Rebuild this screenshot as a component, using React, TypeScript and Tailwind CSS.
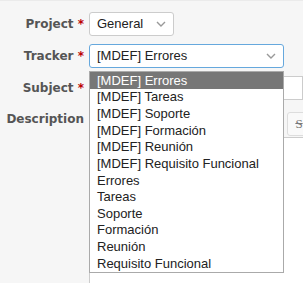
import React from "react";

const label = "w-[84px] shrink-0 text-right text-[12px] font-bold text-[#555]";
const selectBase =
  "flex h-[24px] items-center justify-between rounded-[3px] border bg-white pl-[7px] pr-[7px] text-[13px] text-[#222]";

const trackers = [
  "[MDEF] Errores",
  "[MDEF] Tareas",
  "[MDEF] Soporte",
  "[MDEF] Formación",
  "[MDEF] Reunión",
  "[MDEF] Requisito Funcional",
  "Errores",
  "Tareas",
  "Soporte",
  "Formación",
  "Reunión",
  "Requisito Funcional",
];

function Chevron() {
  return (
    <svg width="10" height="6" viewBox="0 0 10 6" className="shrink-0">
      <path d="M1 1 L5 5 L9 1" fill="none" stroke="#999" strokeWidth="1.4" />
    </svg>
  );
}

function Required() {
  return <span className="text-[#bb0000]"> *</span>;
}

export default function App() {
  return (
    <div className="relative h-[283px] w-[303px] overflow-hidden border-t border-[#ebebeb] bg-[#f6f6f6] font-['DejaVu_Sans',sans-serif]">
      <div className="flex flex-col pt-[11px]">
        <div className="flex items-center gap-[5px]">
          <label className={label}>
            Project
            <Required />
          </label>
          <div className={`${selectBase} w-[85px] border-[#ccc] font-['Liberation_Sans',sans-serif]`}>
            <span>General</span>
            <Chevron />
          </div>
        </div>

        <div className="mt-[8px] flex items-center gap-[5px]">
          <label className={label}>
            Tracker
            <Required />
          </label>
          <div className={`${selectBase} w-[195px] border-[#66a8dd] font-['Liberation_Sans',sans-serif]`}>
            <span>[MDEF] Errores</span>
            <Chevron />
          </div>
        </div>

        <div className="mt-[8px] flex items-center gap-[5px]">
          <label className={`${label} -mt-[1px]`}>
            Subject
            <Required />
          </label>
          <div className="h-[24px] flex-1 border border-[#ccc] bg-white" />
        </div>

        <div className="flex gap-[5px]">
          <label className={`${label} pt-[10px]`}>Description</label>
          <div className="flex flex-1 flex-col">
            {/* toolbar: tabs + buttons, mostly covered by the open list */}
            <div className="flex h-[37px] items-end gap-[8px] pb-[1px] pl-[102px]">
              <span className="h-[24px] w-[24px] shrink-0 rounded-[3px] border border-[#ddd] bg-[#f9f9f9]" />
              <span className="h-[24px] w-[24px] shrink-0 rounded-[3px] border border-[#ddd] bg-[#f9f9f9]" />
              <span className="h-[24px] w-[24px] shrink-0 rounded-[3px] border border-[#ddd] bg-[#f9f9f9]" />
              <span className="flex h-[24px] w-[24px] shrink-0 items-center justify-center rounded-[3px] border border-[#ddd] bg-[#f9f9f9] font-['Liberation_Serif',serif] text-[13px] text-[#777] line-through">
                S
              </span>
            </div>
            <div className="h-[160px] border border-[#ccc] bg-white" />
          </div>
        </div>
      </div>

      <ul className="absolute left-[89px] top-[70px] w-[195px] border border-[#aaa] bg-white font-['Liberation_Sans',sans-serif] text-[13px] text-[#222]">
        {trackers.map((t, i) => (
          <li
            key={t + i}
            className={`flex h-[16.67px] items-center whitespace-nowrap pl-[7px] ${
              i === 0 ? "bg-[#777] text-white" : ""
            }`}
          >
            {t}
          </li>
        ))}
      </ul>
    </div>
  );
}
